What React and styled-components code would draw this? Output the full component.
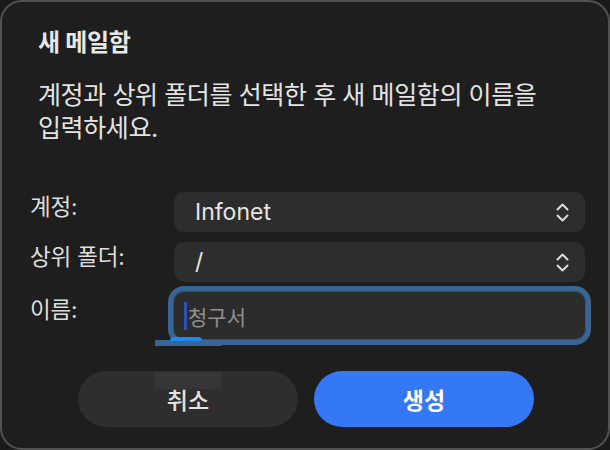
import React from "react";
import styled, { createGlobalStyle } from "styled-components";

const Global = createGlobalStyle`
  html, body { margin: 0; padding: 0; background: #1a1a1a; }
  * { box-sizing: border-box; }
  body { font-family: Inter, "Noto Sans CJK KR", sans-serif; -webkit-font-smoothing: antialiased; }
`;

const Dialog = styled.div`
  position: relative;
  width: 610px;
  height: 450px;
  background: #1e1e1e;
  border: 2px solid #525252;
  border-radius: 22px;
  display: flex;
  flex-direction: column;
  padding: 0 23px 0 28px;
  overflow: hidden;
`;

const Title = styled.h1`
  margin: 26px 0 0 8px;
  font-size: 24px;
  font-weight: 700;
  line-height: 30px;
  color: #e8e8e8;
  letter-spacing: -0.3px;
`;

const Description = styled.p`
  margin: 21px 0 0 8px;
  max-width: 540px;
  font-size: 25px;
  font-weight: 400;
  line-height: 33px;
  color: #e4e4e4;
  letter-spacing: -0.4px;
  word-break: keep-all;
`;

const FormGrid = styled.div`
  margin-top: 47px;
  display: grid;
  grid-template-columns: 144px 1fr;
  row-gap: 10px;
`;

const Label = styled.label`
  align-self: start;
  padding-top: ${(p) => p.$offset || 0}px;
  font-size: 22.5px;
  line-height: 30px;
  color: #dddddd;
  letter-spacing: -0.2px;
`;

const Select = styled.div`
  height: 40px;
  background: #2d2d2d;
  border-radius: 10px;
  display: flex;
  align-items: center;
  justify-content: space-between;
  padding: 0 16px 0 21px;
  font-size: 23px;
  color: #e6e6e6;
`;

const Field = styled.div`
  height: 47px;
  background: #2c2c2c;
  border-radius: 10px;
  box-shadow: 0 0 0 1px #2f4f70, 0 0 0 6px #396592;
  display: flex;
  align-items: center;
  padding-left: 10px;
  font-size: 21px;
  color: #8f8f8f;
`;

const Caret = styled.span`
  display: inline-block;
  width: 3px;
  height: 28px;
  background: #3050b0;
  margin-right: 1px;
`;

const Buttons = styled.div`
  margin-top: 32px;
  display: flex;
  justify-content: center;
  gap: 16px;
  padding-right: 3px;
`;

const Button = styled.button`
  width: 220px;
  height: 56px;
  border: none;
  border-radius: 28px;
  background: ${(p) => (p.$primary ? "#3478f6" : "#2e2e2e")};
  color: ${(p) => (p.$primary ? "#ffffff" : "#e2e2e2")};
  font-family: inherit;
  font-size: 23px;
  font-weight: ${(p) => (p.$primary ? 700 : 500)};
  padding: 0;
`;

const Glitch = styled.div`
  position: absolute;
  left: ${(p) => p.$x}px;
  top: ${(p) => p.$y}px;
  width: ${(p) => p.$w}px;
  height: ${(p) => p.$h}px;
  background: ${(p) => p.$c};
  border-radius: ${(p) => p.$r || "0"};
`;

const Chevrons = () => (
  <svg width="13" height="19" viewBox="0 0 13 19" fill="none">
    <path d="M1.5 6.5 L6.5 1.5 L11.5 6.5" stroke="#dcdcdc" strokeWidth="2" strokeLinecap="round" strokeLinejoin="round" />
    <path d="M1.5 12.5 L6.5 17.5 L11.5 12.5" stroke="#dcdcdc" strokeWidth="2" strokeLinecap="round" strokeLinejoin="round" />
  </svg>
);

export default function App() {
  return (
    <>
      <Global />
      <Dialog>
        <Title>새 메일함</Title>
        <Description>계정과 상위 폴더를 선택한 후 새 메일함의 이름을 입력하세요.</Description>
        <FormGrid>
          <Label>계정:</Label>
          <Select>
            <span>Infonet</span>
            <Chevrons />
          </Select>
          <Label>상위 폴더:</Label>
          <Select>
            <span>/</span>
            <Chevrons />
          </Select>
          <Label $offset={3}>이름:</Label>
          <Field>
            <Caret />
            <span>청구서</span>
          </Field>
        </FormGrid>
        <Buttons>
          <Button>취소</Button>
          <Button $primary>생성</Button>
        </Buttons>
        <Glitch $x={153} $y={338} $w={67} $h={6} $c="#396592" />
        <Glitch $x={168} $y={335} $w={32} $h={4} $c="#1a8cf0" $r="16px 16px 0 0" />
        <Glitch $x={153} $y={370} $w={66} $h={17} $c="#363636" />
      </Dialog>
    </>
  );
}
